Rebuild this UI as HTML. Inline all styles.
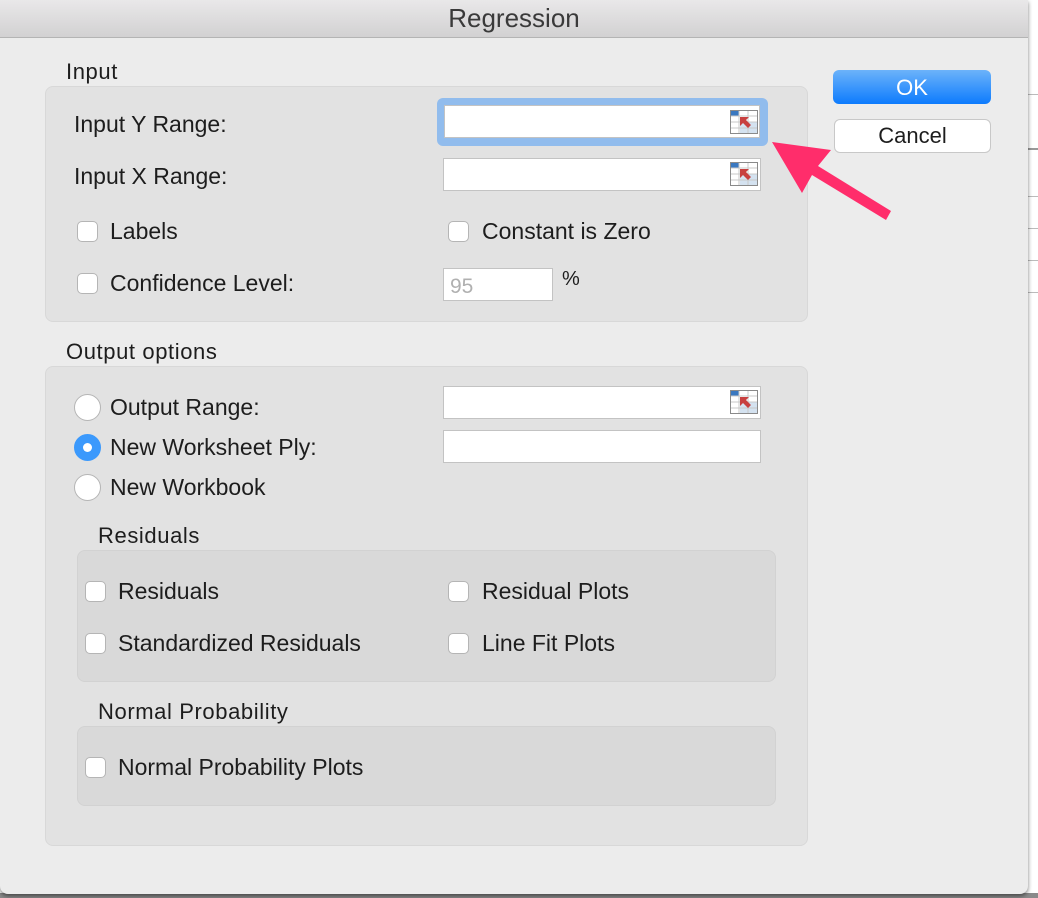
<!DOCTYPE html>
<html><head><meta charset="utf-8"><style>
*{margin:0;padding:0;box-sizing:border-box}
body{width:1038px;height:898px;overflow:hidden;background:#fff;font-family:"Liberation Sans",sans-serif;color:#1d1d1d;position:relative}
.abs{position:absolute}
.dlg{left:0;top:0;width:1028px;height:894px;background:#ececec;border-radius:0 0 8px 8px;box-shadow:0 2px 4px rgba(0,0,0,.5)}
.title{left:0;top:0;width:1028px;height:38px;background:linear-gradient(#e9e8e9,#d2d1d2);border-bottom:1px solid #b4b4b4;text-align:center;font-size:26px;line-height:36px;color:#3a3a3a}
.box{background:#e2e2e2;border:1px solid #d8d8d8;border-radius:8px}
.box2{background:#d9d9d9;border:1px solid #d2d2d2;border-radius:8px}
.t{font-size:23px;white-space:nowrap;margin-top:-2px}
.h{font-size:22px;letter-spacing:.6px;white-space:nowrap;margin-top:-2px}
.f{background:#fff;border:1px solid #c3c3c3}
.cb{width:21px;height:21px;background:#fff;border:1px solid #b5b5b5;border-radius:5px}
.rb{width:27px;height:27px;background:#fff;border:1px solid #b5b5b5;border-radius:50%}
</style></head><body>
<div class="abs" style="left:1028px;top:0;width:10px;height:898px;background:#fff"></div>
<div class="abs" style="left:1028px;top:94px;width:10px;height:1px;background:#bbb"></div>
<div class="abs" style="left:1028px;top:148px;width:10px;height:2px;background:#999"></div>
<div class="abs" style="left:1028px;top:196px;width:10px;height:1px;background:#bbb"></div>
<div class="abs" style="left:1028px;top:228px;width:10px;height:1px;background:#bbb"></div>
<div class="abs" style="left:1028px;top:260px;width:10px;height:1px;background:#bbb"></div>
<div class="abs" style="left:1028px;top:292px;width:10px;height:1px;background:#bbb"></div>
<div class="abs" style="left:0;top:893px;width:1038px;height:5px;background:#8a8a8a"></div>
<div class="abs dlg"></div>
<div class="abs title">Regression</div>

<div class="abs h" style="left:66px;top:61px">Input</div>
<div class="abs box" style="left:45px;top:86px;width:763px;height:236px"></div>
<div class="abs t" style="left:74px;top:113px">Input Y Range:</div>
<div class="abs t" style="left:74px;top:165px">Input X Range:</div>
<div class="abs" style="left:437px;top:98px;width:331px;height:48px;background:#91bced;border-radius:6px"></div>
<div class="abs f" style="left:444px;top:105px;width:316px;height:33px"></div>
<div class="abs f" style="left:443px;top:158px;width:318px;height:33px"></div>
<div class="abs cb" style="left:77px;top:221px"></div><div class="abs t" style="left:110px;top:220px">Labels</div>
<div class="abs cb" style="left:448px;top:221px"></div><div class="abs t" style="left:482px;top:220px">Constant is Zero</div>
<div class="abs cb" style="left:77px;top:273px"></div><div class="abs t" style="left:110px;top:272px">Confidence Level:</div>
<div class="abs f" style="left:443px;top:268px;width:110px;height:33px;font-size:21px;color:#b0b0b0;padding:6px 0 0 6px">95</div>
<div class="abs t" style="left:562px;top:270px;font-size:20px">%</div>

<div class="abs h" style="left:66px;top:341px">Output options</div>
<div class="abs box" style="left:45px;top:366px;width:763px;height:480px"></div>
<div class="abs rb" style="left:74px;top:394px"></div><div class="abs t" style="left:110px;top:396px">Output Range:</div>
<div class="abs rb" style="left:74px;top:434px;background:#3b99fc;border-color:#3b99fc"><div class="abs" style="left:8px;top:8px;width:9px;height:9px;border-radius:50%;background:#fff"></div></div><div class="abs t" style="left:110px;top:436px">New Worksheet Ply:</div>
<div class="abs rb" style="left:74px;top:474px"></div><div class="abs t" style="left:110px;top:476px">New Workbook</div>
<div class="abs f" style="left:443px;top:386px;width:318px;height:33px"></div>
<div class="abs f" style="left:443px;top:430px;width:318px;height:33px"></div>

<div class="abs h" style="left:98px;top:525px">Residuals</div>
<div class="abs box2" style="left:77px;top:550px;width:699px;height:132px"></div>
<div class="abs cb" style="left:85px;top:581px"></div><div class="abs t" style="left:118px;top:580px">Residuals</div>
<div class="abs cb" style="left:448px;top:581px"></div><div class="abs t" style="left:482px;top:580px">Residual Plots</div>
<div class="abs cb" style="left:85px;top:633px"></div><div class="abs t" style="left:118px;top:632px">Standardized Residuals</div>
<div class="abs cb" style="left:448px;top:633px"></div><div class="abs t" style="left:482px;top:632px">Line Fit Plots</div>

<div class="abs h" style="left:98px;top:701px">Normal Probability</div>
<div class="abs box2" style="left:77px;top:726px;width:699px;height:80px"></div>
<div class="abs cb" style="left:85px;top:757px"></div><div class="abs t" style="left:118px;top:756px">Normal Probability Plots</div>

<div class="abs" style="left:833px;top:70px;width:158px;height:34px;border-radius:6px;background:linear-gradient(#6cb3fa,#0d7bfd);color:#fff;text-align:center;font-size:22px;line-height:36px">OK</div>
<div class="abs" style="left:834px;top:119px;width:157px;height:34px;border-radius:6px;background:#fff;border:1px solid #c8c8c8;text-align:center;font-size:22px;line-height:32px">Cancel</div>

<svg class="abs" style="left:0;top:0" width="1038" height="898">
<g id="ic">
<rect x="730.5" y="110.5" width="27" height="23" fill="#fff" stroke="#8a8a8a"/>
<rect x="731" y="111" width="8" height="5" fill="#3a78c0"/>
<rect x="740" y="122" width="17" height="11" fill="#d4e2f0"/>
<path d="M739 111v22M748 111v22M731 116h26M731 122h26M731 128h26" stroke="#c8c8c8" stroke-width="1"/>
<path d="M740 117l9 0-3 3 5 5-3 3-5-5-3 3z" fill="#c8403f"/>
</g>
<use href="#ic" y="52"/>
<use href="#ic" y="280"/>
<polygon points="772,142 831,150 818,166 891,211 886,220 812,175 802,193" fill="#ff2d6b"/>
</svg>
</body></html>
